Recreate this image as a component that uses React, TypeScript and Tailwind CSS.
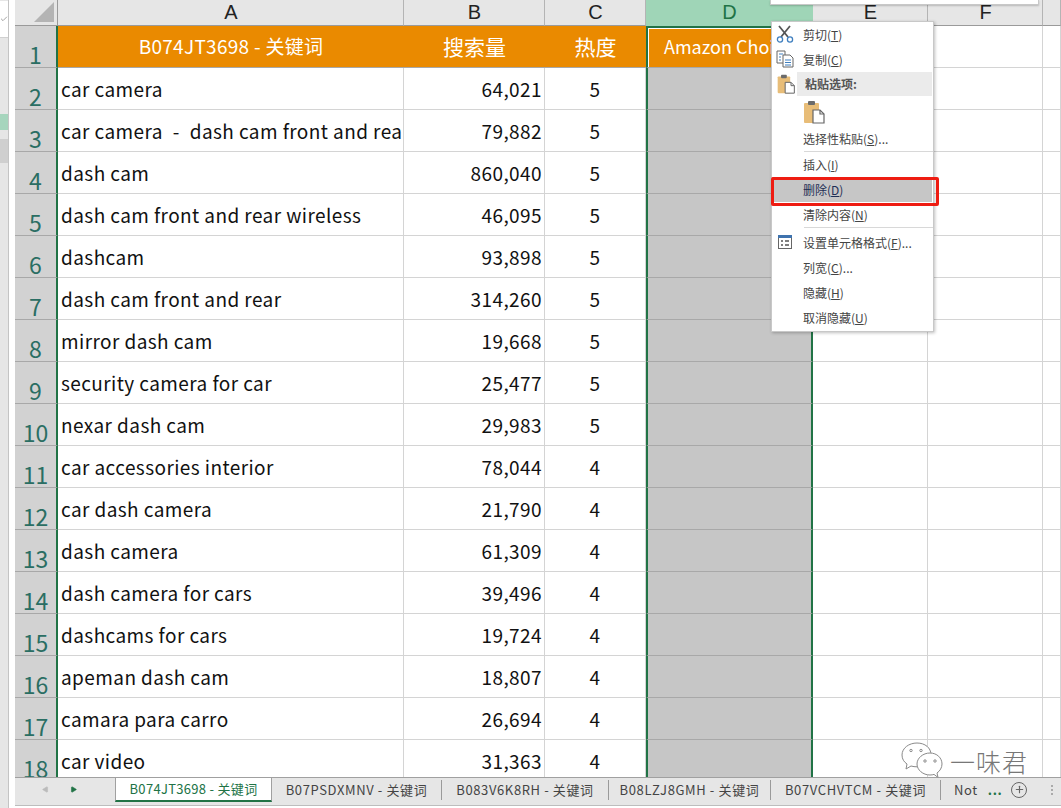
import { ReactNode } from "react";
import { Plus, Play, Check } from "lucide-react";

const cols = "grid-cols-[43px_346px_141px_101px_167px_115px_115px_18px]";
const font = "font-['Noto_Sans_CJK_SC','Noto_Sans',sans-serif]";

const rows: [string, string, number][] = [
  ["car camera", "64,021", 5],
  ["car camera\u2002-\u2002dash cam front and rear", "79,882", 5],
  ["dash cam", "860,040", 5],
  ["dash cam front and rear wireless", "46,095", 5],
  ["dashcam", "93,898", 5],
  ["dash cam front and rear", "314,260", 5],
  ["mirror dash cam", "19,668", 5],
  ["security camera for car", "25,477", 5],
  ["nexar dash cam", "29,983", 5],
  ["car accessories interior", "78,044", 4],
  ["car dash camera", "21,790", 4],
  ["dash camera", "61,309", 4],
  ["dash camera for cars", "39,496", 4],
  ["dashcams for cars", "19,724", 4],
  ["apeman dash cam", "18,807", 4],
  ["camara para carro", "26,694", 4],
  ["car video", "31,363", 4],
];

const tabs = [
  { name: "B07PSDXMNV - 关键词", width: "w-[170px]" },
  { name: "B083V6K8RH - 关键词", width: "w-[167px]" },
  { name: "B08LZJ8GMH - 关键词", width: "w-[162px]" },
  { name: "B07VCHVTCM - 关键词", width: "w-[170px]" },
];

const ColHead = ({ label, active }: { label: string; active?: boolean }) => (
  <div
    className={`h-[26px] border-b border-r text-center pl-[1px] font-['Liberation_Sans',sans-serif] text-[20px] leading-[25px] ${
      active
        ? "bg-[#9fd5b7] text-[#217346] border-b-[#9fd5b7] border-r-[#9fd5b7]"
        : "bg-[#e6e6e6] text-[#222] border-b-[#9a9a9a] border-r-[#b4b4b4]"
    }`}
  >
    {label}
  </div>
);

const RowHead = ({ n }: { n: number }) => (
  <div className="h-[42px] bg-[#d2d2d2] border-b border-[#a8a8a8] border-r-2 border-r-[#217346] text-center text-[23px] leading-[28px] pt-[14px] text-[#2a6e63]">
    {n}
  </div>
);

const Cell = ({ children, className = "" }: { children?: ReactNode; className?: string }) => (
  <div className={`h-[42px] border-b border-r border-[#d4d4d4] overflow-hidden whitespace-nowrap text-[#111] text-[19px] tracking-[0.42px] leading-[41px] ${className}`}>
    {children}
  </div>
);

const MenuItem = ({
  label,
  keyName,
  after = "",
  icon,
  hot,
}: {
  label: string;
  keyName: string;
  after?: string;
  icon?: ReactNode;
  hot?: boolean;
}) => (
  <div className={`h-[25px] flex items-center pl-[31px] text-[12px] text-[#444] relative shrink-0 ${hot ? "bg-[#c6c6c6] mr-[1px]" : ""}`}>
    {icon && <div className="absolute left-[3px] top-[2px] w-[20px] h-[20px]">{icon}</div>}
    <span className={hot ? "text-[#1f2f55]" : ""}>
      {label}(<span className="underline">{keyName}</span>){after}
    </span>
  </div>
);

const MenuSep = () => <div className="h-px ml-[32px] bg-[#d8d8d8] shrink-0" />;

const Clipboard = ({ size }: { size: number }) => (
  <svg width={size} height={size} viewBox="0 0 22 24">
    <rect x="1" y="3" width="15" height="20" rx="1" fill="#e8bd78" />
    <rect x="5" y="1" width="7" height="4" rx="1" fill="#6b6b6b" />
    <path d="M10 10h7l4 4v9H10z" fill="#fff" stroke="#666" strokeWidth="1.2" />
    <path d="M17 10v4h4" fill="none" stroke="#666" strokeWidth="1.2" />
  </svg>
);

const Scissors = () => (
  <svg viewBox="0 0 20 20" width="20" height="20" fill="none">
    <path d="M4 2l9 11M15 2L6 13" stroke="#555" strokeWidth="1.8" />
    <circle cx="5" cy="15.5" r="2.6" stroke="#3f7fbf" strokeWidth="1.3" />
    <circle cx="15" cy="15.5" r="2.6" stroke="#3f7fbf" strokeWidth="1.3" />
  </svg>
);

const CopyIcon = () => (
  <svg viewBox="0 0 20 20" width="20" height="20" fill="#fff">
    <path d="M2 2h8v12H2z" stroke="#666" />
    <path d="M8 6h7l3 3v9H8z" stroke="#666" />
    <path d="M4 5h4M4 8h2M4 11h2M10 11h6M10 13.5h6M10 16h6" stroke="#3f7fbf" />
  </svg>
);

const FormatIcon = () => (
  <svg viewBox="0 0 20 20" width="20" height="20" fill="none">
    <rect x="3.5" y="3.5" width="13" height="13" fill="#fff" stroke="#666" />
    <rect x="3" y="3" width="14" height="3" fill="#3f73ae" />
    <path d="M6 9h2M10 9h4M6 13h2M10 13h4" stroke="#555" strokeWidth="1.4" />
  </svg>
);

const WeChatMark = () => (
  <svg width="42" height="38" viewBox="0 0 42 38" fill="#fff" stroke="#8a8a8a" strokeWidth="1">
    <path d="M16 1C8 1 1 6 1 13c0 4 2 7 5 9l-1 5 5-3c2 .6 4 .8 6 .8 7 0 14-5 14-12S24 1 16 1z" />
    <path d="M29 11c-7 0-13 5-13 11s6 11 13 11c1.500 0 3-.2 4-.6l4 3-1-4.400c3-2 5-5.500 5-9 0-6-5-11-12-11z" />
    <circle cx="10" cy="8.500" r="1.200" />
    <circle cx="20" cy="8.500" r="1.200" />
    <circle cx="24" cy="19" r="1.200" />
    <circle cx="34" cy="19" r="1.200" />
  </svg>
);

const ContextMenu = () => (
  <div className="absolute left-[771px] top-[21px] w-[163px] h-[311px] bg-white border border-[#c8c8c8] shadow-[1px_1px_3px_rgba(0,0,0,0.25)] flex flex-col">
    <MenuItem label="剪切" keyName="T" icon={<Scissors />} />
    <MenuItem label="复制" keyName="C" icon={<CopyIcon />} />
    <div className="h-[24px] flex items-center shrink-0 relative">
      <div className="absolute left-[4px] top-[2px]">
        <Clipboard size={20} />
      </div>
      <div className="ml-[25px] flex-1 mr-[1px] h-full bg-[#ebebeb] flex items-center pl-[8px] text-[12px] font-bold text-[#555]">
        粘贴选项:
      </div>
    </div>
    <div className="h-[30px] pl-[30px] pt-[4px] shrink-0">
      <Clipboard size={24} />
    </div>
    <MenuItem label="选择性粘贴" keyName="S" after="..." />
    <MenuSep />
    <MenuItem label="插入" keyName="I" />
    <MenuItem label="删除" keyName="D" hot />
    <MenuItem label="清除内容" keyName="N" />
    <MenuSep />
    <div className="h-[2px] shrink-0" />
    <MenuItem label="设置单元格格式" keyName="F" after="..." icon={<FormatIcon />} />
    <MenuItem label="列宽" keyName="C" after="..." />
    <MenuItem label="隐藏" keyName="H" />
    <MenuItem label="取消隐藏" keyName="U" />
  </div>
);

const App = () => (
  <div className={`relative w-[1061px] h-[808px] overflow-hidden bg-white flex ${font}`}>
    {/* sliver of the window behind the sheet */}
    <div className="w-[15px] shrink-0 flex">
      <div className="w-[9px] bg-[#e6e6e6] border-r border-[#c4c4c4] flex flex-col items-center">
        <div className="w-full h-[37px] bg-white border-b border-[#d0d0d0] mt-[1px] flex items-center justify-center">
          <Check size={8} className="text-[#777]" />
        </div>
        <div className="w-full h-[16px] mt-[76px] bg-[#a6d5bd]" />
        <div className="w-full h-[24px] mt-[9px] bg-[#cfcfcf]" />
      </div>
    </div>
    <div className="flex-1 min-w-0 flex flex-col">
      <div className="h-[777px] overflow-hidden">
        <div className={`grid ${cols}`}>
          <div className="h-[26px] bg-[#e6e6e6] border-b border-r border-[#9a9a9a] flex items-end justify-end p-[3px]">
            <div className="w-0 h-0 border-l-[20px] border-l-transparent border-b-[20px] border-b-[#b4b4b4]" />
          </div>
          <ColHead label="A" />
          <ColHead label="B" />
          <ColHead label="C" />
          <ColHead label="D" active />
          <ColHead label="E" />
          <ColHead label="F" />
          <ColHead label="" />

          <RowHead n={1} />
          <div className="h-[42px] bg-[#ea8a00] text-white text-[19px] tracking-[0.3px] flex items-center justify-center border-b border-[#a8a8a8]">
            B074JT3698 - 关键词
          </div>
          <div className="h-[42px] bg-[#ea8a00] text-white text-[21px] flex items-center justify-center border-b border-[#a8a8a8]">
            搜索量
          </div>
          <div className="h-[42px] bg-[#ea8a00] text-white text-[21px] flex items-center justify-center border-b border-[#a8a8a8]">
            热度
          </div>
          <div className="h-[42px] bg-[#ea8a00] text-white text-[18px] leading-[36px] pl-[16px] border-2 border-b-1 border-[#217346] border-b-[#a8a8a8] shadow-[inset_1px_1px_0_#fff] overflow-hidden whitespace-nowrap">
            Amazon Choice
          </div>
          <Cell />
          <Cell />
          <Cell />

          {rows.map(([term, volume, heat], i) => (
            <div key={term} className="contents">
              <RowHead n={i + 2} />
              <Cell className="pl-[3px]">{term}</Cell>
              <Cell className="text-right pr-[2px]">{volume}</Cell>
              <Cell className="text-center">{heat}</Cell>
              <div className="h-[42px] bg-[#c6c6c6] border-x-2 border-x-[#217346] border-b border-b-[#a8a8a8]" />
              <Cell />
              <Cell />
              <Cell />
            </div>
          ))}
        </div>
      </div>

      <div className="h-[29px] bg-[#e6e6e6] border-t border-t-[#a0a0a0] border-b border-b-[#bdbdbd] flex items-start text-[13px] text-[#444] tracking-[0.62px] whitespace-nowrap">
        <div className="w-[100px] h-[23px] flex items-center pl-[27px] gap-[21px] shrink-0">
          <Play size={7} className="rotate-180 fill-[#bbb] text-[#bbb]" />
          <Play size={7} className="fill-[#217346] text-[#217346]" />
        </div>
        <div className="w-[157px] h-[25px] -mt-px bg-white border-x border-t border-[#a0a0a0] border-b-2 border-b-[#217346] text-[#217346] tracking-[0.3px] flex items-center justify-center shrink-0">
          B074JT3698 - 关键词
        </div>
        {tabs.map((t) => (
          <div key={t.name} className={`${t.width} h-[23px] shrink-0 flex items-center`}>
            <span className="flex-1 text-center">{t.name}</span>
            <span className="w-px h-[20px] bg-[#9a9a9a]" />
          </div>
        ))}
        <div className="flex items-center h-[23px] pl-[13px] flex-1">
          <span>Not</span>
          <span className="ml-[10px] font-bold text-[#217346]">...</span>
          <span className="ml-[9px] w-[16px] h-[16px] rounded-full border border-[#666] flex items-center justify-center">
            <Plus size={11} strokeWidth={2.5} className="text-[#666]" />
          </span>
          <span className="ml-[24px] flex flex-col gap-[2px]">
            <i className="w-[2px] h-[2px] bg-[#aaa]" />
            <i className="w-[2px] h-[2px] bg-[#aaa]" />
            <i className="w-[2px] h-[2px] bg-[#aaa]" />
          </span>
        </div>
      </div>
    </div>

    {/* menu above the one that was cut off at the top of the shot */}
    <div className="absolute left-[770px] top-0 w-[269px] h-[5px] bg-white border-b border-x border-[#c8c8c8] shadow-[0_1px_2px_rgba(0,0,0,0.2)]" />
    <ContextMenu />
    <div className="absolute left-[771px] top-[177px] w-[168px] h-[29px] border-[3px] border-[#ee1c12] rounded-[2px]" />
    <div className="absolute left-[901px] top-[742px] flex items-center gap-[7px]">
      <WeChatMark />
      <span className="text-[25px] leading-none text-[#777] font-light tracking-[1px] whitespace-nowrap">一味君</span>
    </div>
  </div>
);

export default App;
